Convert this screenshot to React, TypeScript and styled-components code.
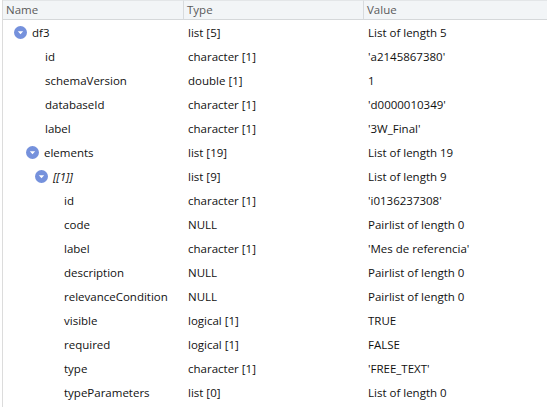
import React from 'react'
import styled, { createGlobalStyle } from 'styled-components'

const GlobalStyle = createGlobalStyle`
  html, body {
    margin: 0;
    padding: 0;
    background: #ffffff;
  }
  body {
    font-family: 'Segoe UI', 'Open Sans', 'Liberation Sans', sans-serif;
    font-size: 11.5px;
    color: #111111;
  }
`

interface Row {
  name: string
  type: string
  value: string
  depth: number
  expandable?: boolean
  italic?: boolean
}

const rows: Row[] = [
  { name: 'df3', type: 'list [5]', value: 'List of length 5', depth: 0, expandable: true },
  { name: 'id', type: 'character [1]', value: "'a2145867380'", depth: 1 },
  { name: 'schemaVersion', type: 'double [1]', value: '1', depth: 1 },
  { name: 'databaseId', type: 'character [1]', value: "'d0000010349'", depth: 1 },
  { name: 'label', type: 'character [1]', value: "'3W_Final'", depth: 1 },
  { name: 'elements', type: 'list [19]', value: 'List of length 19', depth: 1, expandable: true },
  { name: '[[1]]', type: 'list [9]', value: 'List of length 9', depth: 2, expandable: true, italic: true },
  { name: 'id', type: 'character [1]', value: "'i0136237308'", depth: 3 },
  { name: 'code', type: 'NULL', value: 'Pairlist of length 0', depth: 3 },
  { name: 'label', type: 'character [1]', value: "'Mes de referencia'", depth: 3 },
  { name: 'description', type: 'NULL', value: 'Pairlist of length 0', depth: 3 },
  { name: 'relevanceCondition', type: 'NULL', value: 'Pairlist of length 0', depth: 3 },
  { name: 'visible', type: 'logical [1]', value: 'TRUE', depth: 3 },
  { name: 'required', type: 'logical [1]', value: 'FALSE', depth: 3 },
  { name: 'type', type: 'character [1]', value: "'FREE_TEXT'", depth: 3 },
  { name: 'typeParameters', type: 'list [0]', value: 'List of length 0', depth: 3 },
]

// left padding of the name cell per depth (rows with a toggle / plain rows)
const iconIndent = [11, 23, 32]
const leafIndent = [0, 42, 0, 61]

const Viewer = styled.div`
  width: 545px;
  height: 407px;
  box-sizing: border-box;
  border-left: 1px solid #dcdcdc;
  margin-left: 2px;
  overflow: hidden;
`

const Grid = styled.div`
  display: grid;
  grid-template-columns: 180px 180px 1fr;
`

const HeaderCell = styled.div<{ $first?: boolean }>`
  height: 18px;
  line-height: 18px;
  background: #f2f5f7;
  border-top: 1px solid #e3e6e8;
  border-bottom: 1px solid #d5d8da;
  border-left: ${({ $first }) => ($first ? 'none' : '1px solid #d8dbdd')};
  padding-left: 3px;
  color: #5a5a5a;
`

const NameCell = styled.div<{ $indent: number }>`
  height: 24px;
  display: flex;
  align-items: center;
  gap: 5px;
  padding-left: ${({ $indent }) => $indent}px;
  white-space: nowrap;
`

const Cell = styled.div`
  height: 24px;
  display: flex;
  align-items: center;
  padding-left: 5px;
  white-space: nowrap;
`

const Label = styled.span<{ $italic?: boolean }>`
  font-style: ${({ $italic }) => ($italic ? 'italic' : 'normal')};
`

const Toggle = () => (
  <svg width="13" height="13" viewBox="0 0 13 13">
    <circle cx="6.5" cy="6.5" r="6.5" fill="#7591dc" />
    <path d="M3.8 5.2 L9.2 5.2 L6.5 8.2 Z" fill="#ffffff" />
  </svg>
)

const App: React.FC = () => (
  <>
    <GlobalStyle />
    <Viewer>
      <Grid>
        <HeaderCell $first>Name</HeaderCell>
        <HeaderCell>Type</HeaderCell>
        <HeaderCell>Value</HeaderCell>
        {rows.map((r, i) => (
          <React.Fragment key={i}>
            <NameCell $indent={r.expandable ? iconIndent[r.depth] : leafIndent[r.depth]}>
              {r.expandable && <Toggle />}
              <Label $italic={r.italic}>{r.name}</Label>
            </NameCell>
            <Cell>{r.type}</Cell>
            <Cell>{r.value}</Cell>
          </React.Fragment>
        ))}
      </Grid>
    </Viewer>
  </>
)

export default App
